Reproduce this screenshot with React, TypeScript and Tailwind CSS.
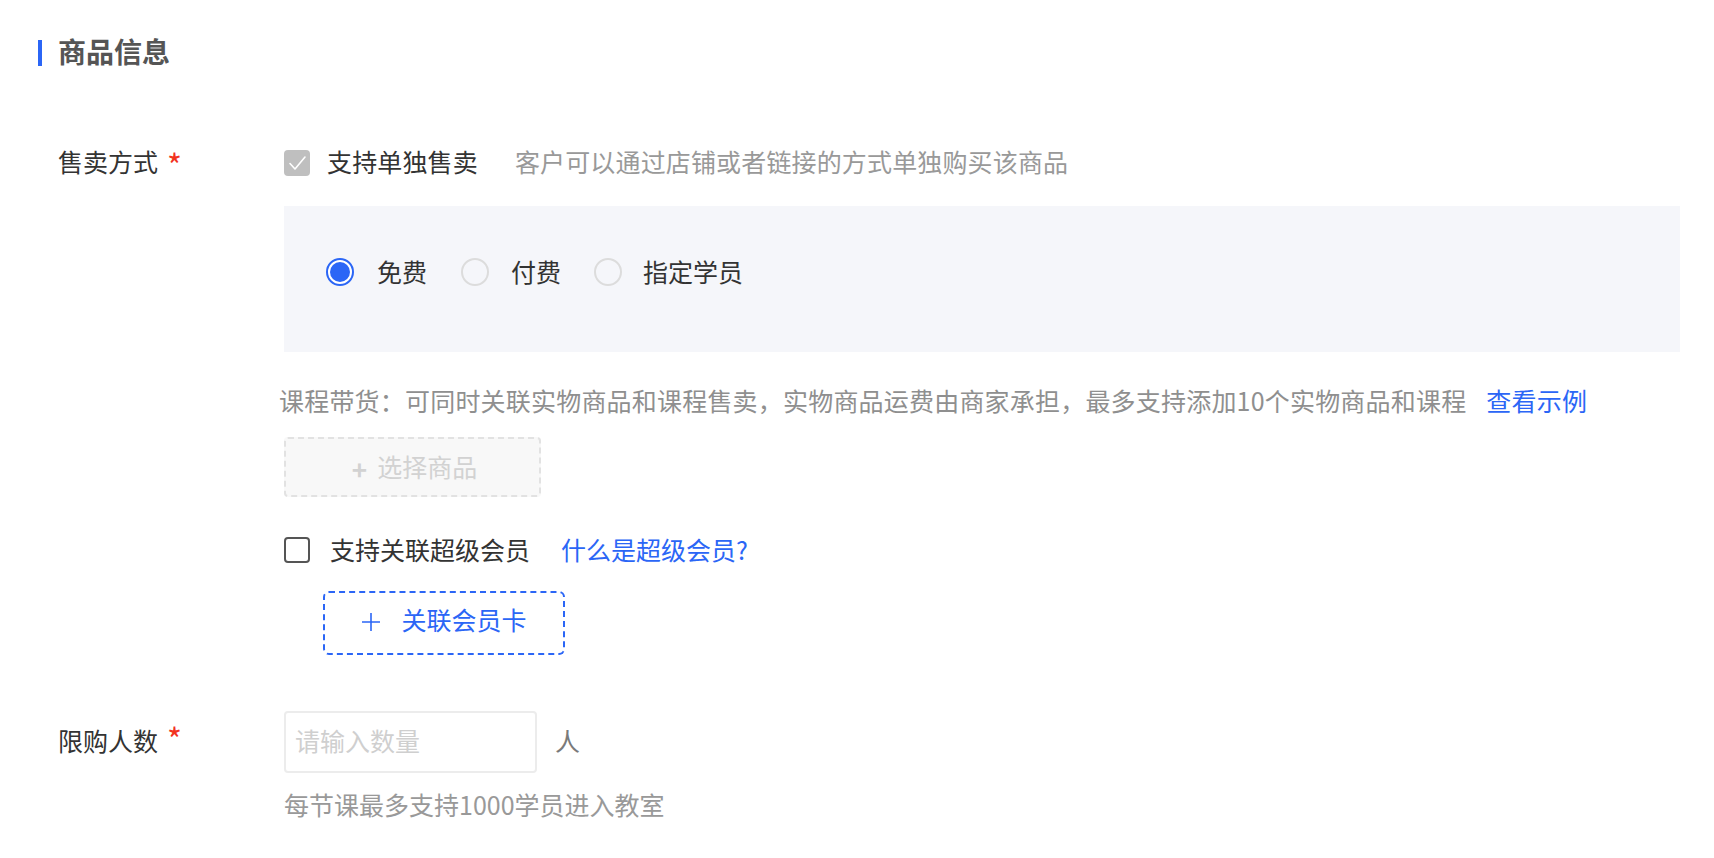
import React from "react";

function CheckedDisabled() {
  return (
    <span className="w-[26px] h-[26px] rounded-[4px] bg-[#bfbfbf] flex items-center justify-center shrink-0">
      <svg width="20" height="20" viewBox="0 0 20 20" fill="none">
        <path d="M3 10.5 L8 16 L18 4" stroke="#ffffff" strokeWidth="1.6" strokeLinecap="round" strokeLinejoin="round" />
      </svg>
    </span>
  );
}

function RadioOn() {
  return (
    <svg width="28" height="28" viewBox="0 0 28 28" className="shrink-0">
      <circle cx="14" cy="14" r="13" fill="#ffffff" stroke="#2b66f6" strokeWidth="2" />
      <circle cx="14" cy="14" r="10" fill="#2b66f6" />
    </svg>
  );
}

function RadioOff() {
  return (
    <svg width="28" height="28" viewBox="0 0 28 28" className="shrink-0">
      <circle cx="14" cy="14" r="13" fill="none" stroke="#dcdcdc" strokeWidth="2" />
    </svg>
  );
}

export default function App() {
  return (
    <div className="w-[1714px] h-[858px] bg-white overflow-hidden font-['Noto_Sans_CJK_SC',sans-serif] text-[25px] text-[#333]">
      {/* Title */}
      <div className="flex items-center pl-[38px] pt-[40px] h-[66px]">
        <span className="w-[4px] h-[26px] bg-[#2b66f6] shrink-0" />
        <span className="ml-[16px] text-[28px] leading-[26px] font-bold text-[#555] -mt-[4px]">商品信息</span>
      </div>

      {/* 售卖方式 */}
      <div className="flex pl-[58px] pr-[34px] mt-[84px]">
        <div className="w-[226px] shrink-0 flex h-[26px] items-start">
          <span className="leading-[26px] text-[#333] -mt-[2px]">售卖方式</span>
          <span className="ml-[9px] text-[32px] leading-[32px] text-[#f2331f] -mt-[2px]">*</span>
        </div>
        <div className="flex-1 flex flex-col">
          <div className="flex items-center h-[26px] tracking-[0.15px]">
            <CheckedDisabled />
            <span className="ml-[17px] leading-[26px] text-[#333] -mt-[4px]">支持单独售卖</span>
            <span className="ml-[37px] leading-[26px] text-[#999] -mt-[4px]">客户可以通过店铺或者链接的方式单独购买该商品</span>
          </div>

          <div className="mt-[30px] h-[146px] bg-[#f5f6fa] pl-[42px] pt-[52px]">
            <div className="flex items-center h-[28px]">
              <RadioOn />
              <span className="ml-[23px] leading-[28px] text-[#333] -mt-[2px]">免费</span>
              <span className="ml-[34px]"><RadioOff /></span>
              <span className="ml-[22px] leading-[28px] text-[#333] -mt-[2px]">付费</span>
              <span className="ml-[33px]"><RadioOff /></span>
              <span className="ml-[21px] leading-[28px] text-[#333] -mt-[2px]">指定学员</span>
            </div>
          </div>

          <div className="mt-[32px] -ml-[5px] flex items-center h-[34px] leading-[34px] tracking-[0.2px]">
            <span className="text-[#8f8f8f] -mt-[3px]">课程带货：可同时关联实物商品和课程售卖，实物商品运费由商家承担，最多支持添加10个实物商品和课程</span>
            <span className="ml-[20px] text-[#2b66f6] -mt-[3px]">查看示例</span>
          </div>

          <div className="mt-[19px] w-[257px] h-[60px] border-2 border-dashed border-[#e2e2e2] rounded-[4px] bg-[#f8f8f8] flex items-center justify-center text-[#d2d2d2]">
            <span className="text-[26px] font-bold leading-none mt-[4px] mr-[10px] ml-[4px]">+</span>
            <span className="leading-[30px] -mt-[3px]">选择商品</span>
          </div>

          <div className="mt-[40px] flex items-center h-[26px]">
            <span className="w-[26px] h-[26px] rounded-[4px] border-2 border-[#555] shrink-0" />
            <span className="ml-[20px] leading-[26px] text-[#333] -mt-[3px]">支持关联超级会员</span>
            <span className="ml-[31px] leading-[26px] text-[#2b66f6] -mt-[3px]">什么是超级会员?</span>
          </div>

          <div className="mt-[28px] ml-[39px] w-[242px] h-[64px] border-2 border-dashed border-[#2b66f6] rounded-[6px] flex items-center justify-center text-[#2b66f6]">
            <svg width="20" height="20" viewBox="0 0 20 20" className="shrink-0 -mt-[2px]">
              <path d="M10 1 V19 M1 10 H19" stroke="#2b66f6" strokeWidth="1.6" />
            </svg>
            <span className="ml-[20px] leading-[30px] -mt-[8px]">关联会员卡</span>
          </div>
        </div>
      </div>

      {/* 限购人数 */}
      <div className="flex pl-[58px] pr-[34px] mt-[56px]">
        <div className="w-[226px] shrink-0 flex h-[62px] items-center">
          <span className="leading-[26px] text-[#333] -mt-[4px]">限购人数</span>
          <span className="ml-[9px] text-[32px] leading-[32px] text-[#f2331f] -mt-[8px]">*</span>
        </div>
        <div className="flex-1 flex flex-col">
          <div className="flex items-center h-[62px]">
            <div className="w-[253px] h-[62px] border-2 border-[#ececec] rounded-[4px] flex items-center pl-[9px] text-[#cfcfcf]">
              <span className="-mt-[2px]">请输入数量</span>
            </div>
            <span className="ml-[18px] text-[#7a7a7a] -mt-[2px]">人</span>
          </div>
          <div className="mt-[14px] h-[34px] leading-[34px] text-[#999]">每节课最多支持1000学员进入教室</div>
        </div>
      </div>
    </div>
  );
}
